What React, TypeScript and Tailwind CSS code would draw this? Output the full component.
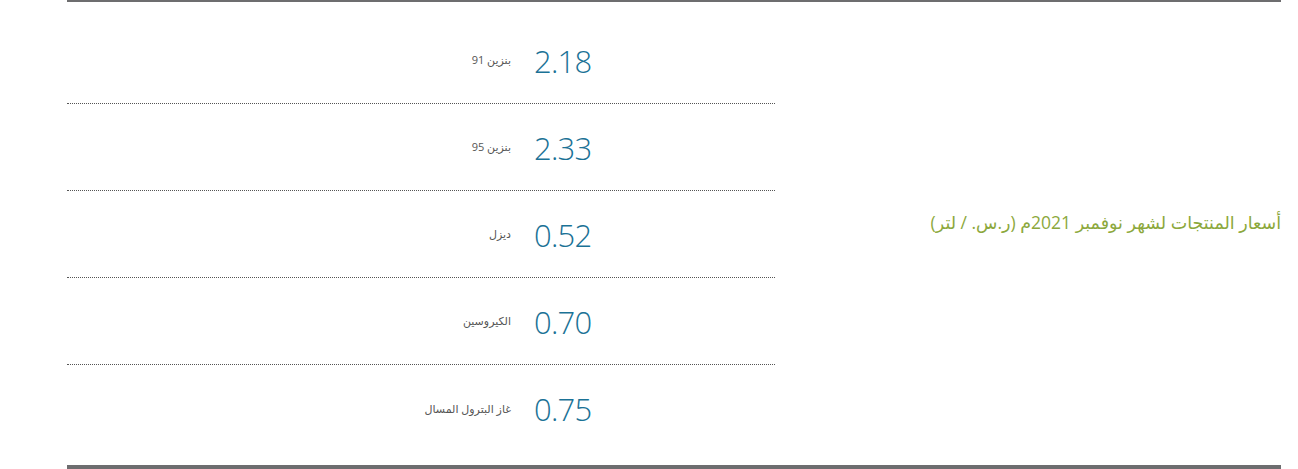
const prices = [
  { label: "بنزين 91", value: "2.18" },
  { label: "بنزين 95", value: "2.33" },
  { label: "ديزل", value: "0.52" },
  { label: "الكيروسين", value: "0.70" },
  { label: "غاز البترول المسال", value: "0.75" },
];

const App = () => {
  return (
    <div className="h-[469px] w-[1298px] bg-white pl-[67px] pr-[17px] font-['Open_Sans','DejaVu_Sans',sans-serif]">
      <div className="flex h-full border-t-2 border-b-4 border-[#6d6d6f] pt-[15px] pb-[13px]">
        <div className="w-[708px]">
          {prices.map((p, i) => (
            <div
              key={p.label}
              className={`flex h-[87px] items-center pt-[2px] ${
                i < prices.length - 1 ? "border-b border-dotted border-[#555]" : ""
              }`}
            >
              <div
                dir="rtl"
                className="w-[456px] pr-[12px] text-right text-[11px] leading-none text-[#555] -mt-[3px]"
              >
                {p.label}
              </div>
              <div className="pl-[11px] text-[31px] font-light leading-none tracking-[-0.8px] text-[#1b7296]">
                {p.value}
              </div>
            </div>
          ))}
        </div>
        <div className="flex flex-1 items-center justify-end">
          <h2 dir="rtl" className="-mt-[24px] text-[17.5px] font-normal text-[#8ca83c]">
            أسعار المنتجات لشهر نوفمبر 2021م (ر.س. / لتر)
          </h2>
        </div>
      </div>
    </div>
  );
};

export default App;
